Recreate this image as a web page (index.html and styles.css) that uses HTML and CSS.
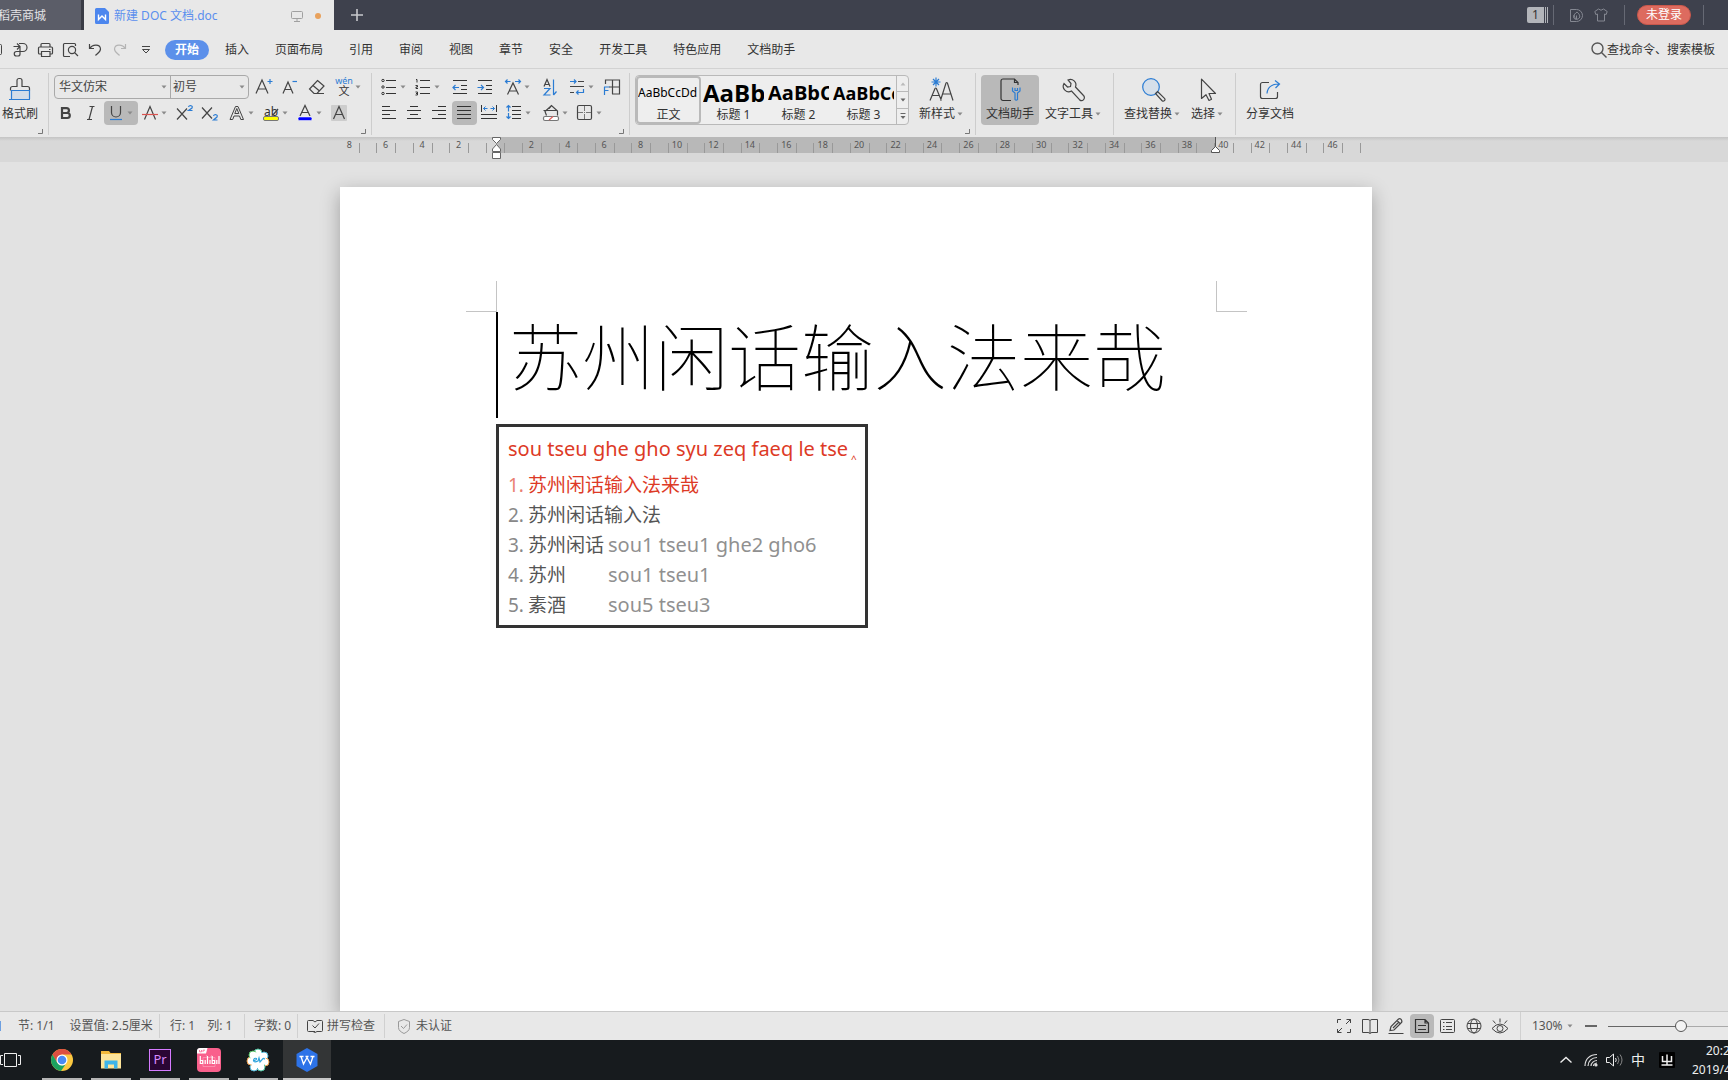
FILE: index.html
```html
<!DOCTYPE html>
<html lang="zh-CN">
<head>
<meta charset="utf-8">
<title>新建 DOC 文档.doc</title>
<link rel="stylesheet" href="styles.css">
</head>
<body>
<svg class="sprite" aria-hidden="true">
  <symbol id="caret" viewBox="0 0 8 8"><path d="M1.500 2.500h5L4 5.500z" fill="#8a8a8a"/></symbol>
  <symbol id="launch" viewBox="0 0 6 6"><path d="M5.500 1v4.500H1" fill="none" stroke="#777"/></symbol>
</svg>

<header class="titlebar">
  <button class="tab tab-store">稻壳商城</button>
  <div class="tab tab-doc">
    <svg width="14" height="16" viewBox="0 0 14 16"><path d="M1.500 0H10l4 4v10.500a1.500 1.500 0 0 1-1.500 1.500h-11A1.500 1.500 0 0 1 0 14.500v-13A1.500 1.500 0 0 1 1.500 0z" fill="#4c86ee"/><path d="M3.500 6.500v5L7 8l3.500 3.500v-5" fill="none" stroke="#fff" stroke-width="1.400"/></svg>
    <span class="tab-name">新建 DOC 文档.doc</span>
    <svg class="tab-screen" width="12" height="12" viewBox="0 0 12 12"><path d="M1.500 1.500h9a1 1 0 0 1 1 1v5a1 1 0 0 1-1 1h-9a1 1 0 0 1-1-1v-5a1 1 0 0 1 1-1zM6 9v2M3 11.500h6" fill="none" stroke="#a0a0a0"/></svg>
    <span class="tab-dot"></span>
  </div>
  <button class="tab-add" aria-label="新建"><svg width="14" height="14" viewBox="0 0 14 14"><path d="M7 1v12M1 7h12" stroke="#c8c9cd" stroke-width="1.600"/></svg></button>
  <div class="title-tools">
    <span class="badge">1</span><span class="badge-stack"></span>
    <span class="bar"></span>
    <svg class="t-docer" width="13" height="13" viewBox="0 0 13 13" fill="none" stroke="#858892"><path d="M.5.5H6.500a6 6 0 0 1 0 12H.5z"/><path d="M6.500 10.500c-5-1-3-5 .5-7.500 2.500 2 5 6-.5 7.500zM6.500 10V6.500M4 6q0 3 2.500 4"/></svg>
    <svg class="t-skin" width="14" height="14" viewBox="0 0 14 14" fill="none" stroke="#858892"><path d="M4.500 1L.8 3.500l1 3 1.700-.5v7h7v-7l1.700.5 1-3L9.500 1q-2.500 2.500-5 0z"/></svg>
    <span class="bar"></span>
    <button class="login">未登录</button>
    <span class="bar"></span>
  </div>
</header>

<nav class="menubar">
  <div class="quick">
    <svg width="7" height="24" viewBox="0 0 7 24" fill="none" stroke="#444"><path d="M0 6.500h.5a1 1 0 0 1 1 1v8a1 1 0 0 1-1 1H0"/></svg>
    <button aria-label="输出为PDF"><svg viewBox="0 0 24 24" fill="none" stroke="#444" stroke-width="1.200"><path d="M5.500 8.500h6M9 5.500l3 3-3 3M11 5.500h4a4 4 0 0 1 0 8H8.500a2.200 2.200 0 0 0 0 4.500h1.500a2 2 0 0 0 2-2V9"/></svg></button>
    <button aria-label="打印"><svg viewBox="0 0 24 24" fill="none" stroke="#444" stroke-width="1.200"><path d="M8 9V6.500a1 1 0 0 1 1-1h7a1 1 0 0 1 1 1V9M8 16H6.500a1 1 0 0 1-1-1v-5a1 1 0 0 1 1-1h12a1 1 0 0 1 1 1v5a1 1 0 0 1-1 1H17M8.500 13.500h8.500v5H8.500zM16 11.500h1.500"/></svg></button>
    <button aria-label="打印预览"><svg viewBox="0 0 24 24" fill="none" stroke="#444" stroke-width="1.200"><path d="M12 18.500H6.500a1 1 0 0 1-1-1v-11a1 1 0 0 1 1-1h10a1 1 0 0 1 1 1V8M16.500 14.500l3.500 3.500"/><circle cx="14" cy="12" r="3.600"/></svg></button>
    <button aria-label="撤销"><svg viewBox="0 0 24 24" fill="none" stroke="#444" stroke-width="1.200"><path d="M6.500 6v4.500H11M7 10.500C9 6.500 17 5.500 17.500 11c0 3-3 4.500-5 6.500"/></svg></button>
    <button aria-label="恢复"><svg viewBox="0 0 24 24" fill="none" stroke="#b4b4b4" stroke-width="1.200"><path d="M17.500 6v4.500H13M17 10.500C15 6.500 7 5.500 6.500 11c0 3 3 4.500 5 6.500"/></svg></button>
    <button aria-label="自定义快速访问工具栏"><svg viewBox="0 0 24 24" fill="none" stroke="#444"><path d="M9 8.500h8M9.500 11.500h7l-3.500 3.500z"/></svg></button>
  </div>
  <div class="menus">
    <button class="active">开始</button><button>插入</button><button>页面布局</button><button>引用</button><button>审阅</button><button>视图</button><button>章节</button><button>安全</button><button>开发工具</button><button>特色应用</button><button>文档助手</button>
  </div>
  <button class="search"><svg width="16" height="16" viewBox="0 0 16 16" fill="none" stroke="#555" stroke-width="1.400"><circle cx="6.500" cy="6.500" r="5.500"/><path d="M10.500 10.500l5 5"/></svg>查找命令、搜索模板</button>
</nav>

<section class="ribbon">
  <div class="group g-brush">
    <button class="big"><svg viewBox="0 0 26 26" fill="none" stroke="#444" stroke-width="1.200"><path d="M4 14h18v9H4z" fill="#d3dde8" stroke="none"/><path d="M3.500 13.500v-2a2 2 0 0 1 2-2H10V3.500a2 2 0 0 1 2-2h1a2 2 0 0 1 2 2v6h5.500a2 2 0 0 1 2 2v2"/><path d="M2 22.500h21M4.500 22V13.500h18V22" stroke="#2b7cd3"/></svg><span>格式刷</span></button>
    <svg class="launch"><use href="#launch"/></svg>
  </div>

  <div class="group g-font">
    <div class="row">
      <div class="combo">
        <select class="font-name" aria-label="字体"><option>华文仿宋</option></select>
        <select class="font-size" aria-label="字号"><option>初号</option></select>
      </div>
      <button class="tool" aria-label="增大字号"><svg viewBox="0 0 24 24" fill="none" stroke="#444" stroke-width="1.200"><path d="M5 18.500L11 5l6 13.500M7 14h8"/><path d="M16.500 6.500h5M19 4v5" stroke="#2b7cd3"/></svg></button>
      <button class="tool" aria-label="减小字号"><svg viewBox="0 0 24 24" fill="none" stroke="#444" stroke-width="1.200"><path d="M7 18.500L12 7l5 11.500M8.500 14.500h7"/><path d="M16.500 6.500h4.500" stroke="#2b7cd3"/></svg></button>
      <button class="tool sp" aria-label="清除格式"><svg viewBox="0 0 24 24" fill="none" stroke="#444" stroke-width="1.200"><path d="M13.500 5.500l6.500 5.500-7 7.500h-3L5.500 14zM9 10.500l6.500 5.500M10 18.500h10"/></svg></button>
      <button class="tool drop sp" aria-label="拼音指南"><svg viewBox="0 0 24 24"><text x="12" y="9" text-anchor="middle" class="g-wen">wén</text><text x="12" y="20" text-anchor="middle" class="g-zh">文</text></svg><svg class="caret"><use href="#caret"/></svg></button>
    </div>
    <div class="row">
      <button class="tool" aria-label="加粗"><svg viewBox="0 0 24 24" fill="none" stroke="#444" stroke-width="2.200"><path d="M8 7.100h4.500a2.400 2.400 0 0 1 0 4.900H8zM8 12h5.300a2.500 2.500 0 0 1 0 5H8zM8 6v12"/></svg></button>
      <button class="tool" aria-label="倾斜"><svg viewBox="0 0 24 24" fill="none" stroke="#444" stroke-width="1.200"><path d="M10.500 5.500h5M8 18.500h5M13.500 5.500l-3.500 13"/></svg></button>
      <button class="tool drop on" aria-label="下划线"><svg viewBox="0 0 24 24" fill="none" stroke="#444" stroke-width="1.200"><path d="M7.500 5v6.500a4.500 4.500 0 0 0 9 0V5"/><path d="M6 18.500h12" stroke="#2b7cd3"/></svg><svg class="caret"><use href="#caret"/></svg></button>
      <button class="tool drop" aria-label="删除线"><svg viewBox="0 0 24 24" fill="none" stroke="#444" stroke-width="1.200"><path d="M6.500 18.500L12 5.500l5.500 13"/><path d="M4 13.500h16" stroke="#d9534f"/></svg><svg class="caret"><use href="#caret"/></svg></button>
      <button class="tool" aria-label="上标"><svg viewBox="0 0 24 24" fill="none" stroke="#444" stroke-width="1.200"><path d="M5 7.500l10 11M15 7.500l-10 11"/><path d="M16.500 6q.5-1.500 2-1.500 2.500.5 1.500 2.500l-3.500 2.500h4" stroke="#2b7cd3"/></svg></button>
      <button class="tool" aria-label="下标"><svg viewBox="0 0 24 24" fill="none" stroke="#444" stroke-width="1.200"><path d="M5 6.500l10 11M15 6.500l-10 11"/><path d="M16.500 15q.5-1.500 2-1.500 2.500.5 1.500 2.500l-3.500 3h4" stroke="#2b7cd3"/></svg></button>
      <button class="tool drop sp" aria-label="文字效果"><svg viewBox="0 0 24 24" fill="none" stroke="#444"><path d="M5 18.500L10.500 5.500h2.500L18.500 18.500h-2.700l-1.300-3.500H9l-1.300 3.500zM9.800 12.500h4L11.800 7.500z"/></svg><svg class="caret"><use href="#caret"/></svg></button>
      <button class="tool drop" aria-label="突出显示"><svg viewBox="0 0 24 24"><text x="5" y="15" class="g-ab">ab</text><path d="M14 14l5-6" stroke="#444" stroke-width="1.300"/><rect x="4.500" y="15.500" width="15" height="4" rx="1.500" fill="#ff0" stroke="#777"/></svg><svg class="caret"><use href="#caret"/></svg></button>
      <button class="tool drop" aria-label="字体颜色"><svg viewBox="0 0 24 24" fill="none" stroke="#444" stroke-width="1.200"><path d="M7 15l5-10.500L17 15M8.500 11.500h7"/><rect x="5" y="16" width="14" height="3.500" rx="1.500" fill="#00f" stroke="#fff" stroke-width=".5"/></svg><svg class="caret"><use href="#caret"/></svg></button>
      <button class="tool" aria-label="字符底纹"><svg viewBox="0 0 24 24" fill="none" stroke="#444" stroke-width="1.200"><rect x="4" y="4" width="16" height="16" rx="1" fill="#cdcdcd" stroke="none"/><path d="M6.500 18L12 5.500 17.500 18M8.500 13.500h7"/></svg></button>
    </div>
    <svg class="launch"><use href="#launch"/></svg>
  </div>

  <div class="group g-para">
    <div class="row">
      <button class="tool drop" aria-label="项目符号"><svg viewBox="0 0 24 24" fill="none" stroke="#333"><path d="M9 5.500h10M9 12.500h10M9 18.500h10"/><circle cx="6" cy="5.500" r="1.200"/><circle cx="6" cy="12" r="1.200"/><circle cx="6" cy="18.500" r="1.200"/></svg><svg class="caret"><use href="#caret"/></svg></button>
      <button class="tool drop" aria-label="编号"><svg viewBox="0 0 24 24" fill="none" stroke="#333"><path d="M9 5.500h10M9 12.500h10M9 18.500h10M5 4.500h1v3M4.500 10.500h2v1.500h-1.500v1.500h2M4.500 17h2v3h-2M5 18.500h1.500"/></svg><svg class="caret"><use href="#caret"/></svg></button>
      <button class="tool sp" aria-label="减少缩进"><svg viewBox="0 0 24 24" fill="none" stroke="#333"><path d="M5 5.500h14M13 10.500h6M13 14.500h6M5 18.500h14"/><path d="M5 12.500h6M7.500 10L5 12.500 7.500 15" stroke="#2b7cd3" stroke-width="1.200"/></svg></button>
      <button class="tool" aria-label="增加缩进"><svg viewBox="0 0 24 24" fill="none" stroke="#333"><path d="M5 5.500h14M13 10.500h6M13 14.500h6M5 18.500h14"/><path d="M4.500 12.500h6M8 10l2.500 2.500L8 15" stroke="#2b7cd3" stroke-width="1.200"/></svg></button>
      <button class="tool drop sp" aria-label="字符缩放"><svg viewBox="0 0 24 24" fill="none" stroke="#444" stroke-width="1.200"><path d="M6.500 19.500L12 8l5.500 11.500M8.500 16h7"/><path d="M4.500 6.500h5M6.500 4.500l-2 2 2 2M14 6.500h5.500M17.500 4.500l2 2-2 2" stroke="#2b7cd3"/></svg><svg class="caret"><use href="#caret"/></svg></button>
      <button class="tool sp" aria-label="排序"><svg viewBox="0 0 24 24" fill="none" stroke="#444" stroke-width="1.200"><path d="M7 11.500L10 4.500l3 7M8 9.500h4"/><path d="M7 13.500h6l-6 6.500h6.500M16.500 4.500V20M16.500 20l3-3.500" stroke="#2b7cd3"/></svg></button>
      <button class="tool drop sp" aria-label="换行"><svg viewBox="0 0 24 24" fill="none" stroke="#444" stroke-width="1.200"><path d="M13 6.500h6M5 11.500h14M5 17.500h4"/><path d="M5 6.500h6M9 4.500l2 2-2 2M18.500 14v3.500h-7M13.500 15.500l-2 2 2 2" stroke="#2b7cd3"/></svg><svg class="caret"><use href="#caret"/></svg></button>
      <button class="tool" aria-label="制表位"><svg viewBox="0 0 24 24" fill="none" stroke="#444" stroke-width="1.200"><path d="M6.500 9V5h14v14H13M13.500 5v14M10 12h10"/><path d="M5 12h5.500M5.500 12v8M5 15.500h4.500" stroke="#2b7cd3"/></svg></button>
    </div>
    <div class="row">
      <button class="tool" aria-label="左对齐"><svg viewBox="0 0 24 24" stroke="#333"><path d="M5 5.500h8M5 9.500h14M5 13.500h8M5 17.500h14"/></svg></button>
      <button class="tool" aria-label="居中"><svg viewBox="0 0 24 24" stroke="#333"><path d="M8 5.500h8M5 9.500h14M8 13.500h8M5 17.500h14"/></svg></button>
      <button class="tool" aria-label="右对齐"><svg viewBox="0 0 24 24" stroke="#333"><path d="M11 5.500h8M5 9.500h14M11 13.500h8M5 17.500h14"/></svg></button>
      <button class="tool on" aria-label="两端对齐"><svg viewBox="0 0 24 24" stroke="#333"><path d="M5 5.500h14M5 9.500h14M5 13.500h14M5 17.500h14"/></svg></button>
      <button class="tool" aria-label="分散对齐"><svg viewBox="0 0 24 24" fill="none" stroke="#333"><path d="M4.500 4v7M19.500 4v7M4 13.500h16M4 17.500h16"/><path d="M6.500 7.500h4M8.500 5.500l-2 2 2 2M13.500 7.500h4M15.500 5.500l2 2-2 2" stroke="#2b7cd3"/></svg></button>
      <button class="tool drop" aria-label="行距"><svg viewBox="0 0 24 24" fill="none" stroke="#333"><path d="M10 5.500h9M10 9.500h9M10 13.500h9M10 17.500h9"/><path d="M6.500 4.500v6M4.500 6.500l2-2 2 2M6.500 12v6M4.500 15.500l2 2 2-2" stroke="#2b7cd3" stroke-width="1.200"/></svg><svg class="caret"><use href="#caret"/></svg></button>
      <button class="tool drop sp" aria-label="底纹颜色"><svg viewBox="0 0 24 24" fill="none" stroke="#444" stroke-width="1.200"><path d="M7.500 14.500L6 10.500 12.500 4.500l6 5.500v4.500M12.500 4.500l-2.500 3M4.500 9.500h13.500"/><rect x="4.500" y="15.500" width="15" height="4" rx="1.500" fill="#fff" stroke="#777"/><path d="M10 19l4-3.500" stroke="#e0605c"/></svg><svg class="caret"><use href="#caret"/></svg></button>
      <button class="tool drop" aria-label="边框"><svg viewBox="0 0 24 24" fill="none" stroke="#444"><rect x="4.500" y="4.500" width="14" height="14" rx="1.500" stroke-width="1.200"/><path d="M11.500 5v13M5 11.500h13" stroke="#777" stroke-dasharray="5 1 1 1"/></svg><svg class="caret"><use href="#caret"/></svg></button>
    </div>
    <svg class="launch"><use href="#launch"/></svg>
  </div>

  <div class="group g-style">
    <div class="gallery">
      <button class="style on"><span class="s0">AaBbCcDd</span><span>正文</span></button>
      <button class="style"><span class="s1">AaBb</span><span>标题 1</span></button>
      <button class="style"><span class="s2">AaBbC</span><span>标题 2</span></button>
      <button class="style"><span class="s3">AaBbCc</span><span>标题 3</span></button>
      <div class="scroller">
        <button aria-label="上"><svg viewBox="0 0 8 8"><path d="M1.500 5.500h5L4 2.500z" fill="#bbb"/></svg></button>
        <button aria-label="下"><svg viewBox="0 0 8 8"><path d="M1.500 2.500h5L4 5.500z" fill="#666"/></svg></button>
        <button aria-label="更多"><svg viewBox="0 0 8 8"><path d="M1.500 1.500h5" stroke="#666"/><path d="M1.500 4h5L4 7z" fill="#666"/></svg></button>
      </div>
    </div>
    <button class="big"><svg viewBox="0 0 26 26" fill="none" stroke="#444" stroke-width="1.200"><path d="M1 23.500l5-12q.7-1 1.400 0l5 12M3 18.500h7.500M11.500 23.500L17 6q.7-1 1.400 0l5.600 17.500M13.500 17h9"/><path d="M7 .5v9M2.500 5h9M4 2l6 6M10 2L4 8" stroke="#2b7cd3"/></svg><span>新样式<svg class="caret"><use href="#caret"/></svg></span></button>
    <svg class="launch"><use href="#launch"/></svg>
  </div>

  <div class="group g-help">
    <button class="big on"><svg viewBox="0 0 26 26" fill="none" stroke="#333" stroke-width="1.200"><path d="M14 23.500H6a2 2 0 0 1-2-2V4a2 2 0 0 1 2-2h11.500L21 5.500V8M17.500 2v3.500H21"/><path d="M15.500 10.500v3.500l2.500 2v6.500a1.500 1.500 0 0 0 2.500 0V16l2.500-2v-3.500M18 11v2.500h2.500V11" stroke="#2b7cd3"/></svg><span>文档助手</span></button>
    <button class="big"><svg viewBox="0 0 26 26" fill="none" stroke="#444" stroke-width="1.200"><path d="M7 3a5.500 5.500 0 0 1 7.500 7l8 8.500a2.800 2.800 0 0 1-4 4.200l-8-8.700A5.500 5.500 0 0 1 3 6.500L6.500 10l3-.5.500-3z"/></svg><span>文字工具<svg class="caret"><use href="#caret"/></svg></span></button>
  </div>

  <div class="group g-find">
    <button class="big"><svg viewBox="0 0 26 26" fill="none" stroke="#444" stroke-width="1.200"><circle cx="11" cy="10" r="8.300" fill="#d5dfea" stroke="#2b7cd3"/><path d="M17.500 14.500l7 6.800a1.700 1.700 0 0 1-2.400 2.400l-6.600-7.200z"/></svg><span>查找替换<svg class="caret"><use href="#caret"/></svg></span></button>
    <button class="big"><svg viewBox="0 0 26 26" fill="none" stroke="#444" stroke-width="1.200"><path d="M6.500 2.200v19.300l4.500-3.800 3 5.800 2.500-1.200-2.500-5.800h6.500z" stroke-linejoin="round"/></svg><span>选择<svg class="caret"><use href="#caret"/></svg></span></button>
  </div>

  <div class="group g-share">
    <button class="big"><svg viewBox="0 0 26 26" fill="none" stroke="#444" stroke-width="1.200"><path d="M12 5.500H5.500a2 2 0 0 0-2 2v12a2 2 0 0 0 2 2h13a2 2 0 0 0 2-2V15"/><path d="M10 16.500c.5-6 4-9.500 12-9.500M18 3.500l4.500 3.500-4 4" stroke="#2b7cd3"/></svg><span>分享文档</span></button>
  </div>
</section>

<div class="ruler">
  <div class="ruler-inner">
    <i>8</i><i>6</i><i>4</i><i>2</i><i></i><i>2</i><i>4</i><i>6</i><i>8</i><i>10</i><i>12</i><i>14</i><i>16</i><i>18</i><i>20</i><i>22</i><i>24</i><i>26</i><i>28</i><i>30</i><i>32</i><i>34</i><i>36</i><i>38</i><i>40</i><i>42</i><i>44</i><i>46</i>
    <svg class="mark mark-left" viewBox="0 0 9 22" fill="#fff" stroke="#666"><path d="M.5.5h8v2l-4 4-4-4zM4.500 7.500L8.500 12v2.500h-8V12zM.5 15.500h8v6h-8z"/></svg>
    <svg class="mark mark-right" viewBox="0 0 9 22" fill="#fff" stroke="#555"><path d="M4.500 0v10"/><path d="M4.500 9.500l4 4v2h-8v-2z"/></svg>
  </div>
</div>

<main class="workspace">
  <article class="page">
    <div class="corners"><span class="corner tl"></span><span class="corner tr"></span></div>
    <h1 class="heading">苏州闲话输入法来哉</h1>
    <div class="ime">
      <p class="code">sou tseu ghe gho syu zeq faeq le tse<span class="hat">‸</span></p>
      <ol>
        <li class="hit"><b>1.</b><span>苏州闲话输入法来哉</span></li>
        <li><b>2.</b><span>苏州闲话输入法</span></li>
        <li><b>3.</b><span>苏州闲话</span><em>sou1 tseu1 ghe2 gho6</em></li>
        <li><b>4.</b><span>苏州</span><em>sou1 tseu1</em></li>
        <li><b>5.</b><span>素酒</span><em>sou5 tseu3</em></li>
      </ol>
    </div>
  </article>
</main>

<footer class="status">
  <div class="cell c-page"></div>
  <div class="cell c-sec"><span>节: 1/1</span><span>设置值: 2.5厘米</span></div>
  <div class="cell c-pos"><span>行: 1</span><span>列: 1</span></div>
  <div class="cell c-count"><span>字数: 0</span></div>
  <div class="cell c-spell"><svg width="16" height="14" viewBox="0 0 16 14" fill="none" stroke="#444"><path d="M8 12.500H1.500a1 1 0 0 1-1-1v-9a1 1 0 0 1 1-1H6l2 1.500 2-1.500h4.500a1 1 0 0 1 1 1v9a1 1 0 0 1-1 1H10l-2 1-2-1M5.500 6.500L8 9l4-4.500"/></svg>拼写检查</div>
  <div class="cell c-auth"><svg width="12" height="15" viewBox="0 0 12 15" fill="none" stroke="#999"><path d="M6 .5L11.500 2.500v6c0 3-2.500 4.500-5.500 6-3-1.500-5.500-3-5.500-6v-6zM3 7l2.500 2.500L9 5.500"/></svg>未认证</div>
  <div class="views">
    <button aria-label="全屏"><svg viewBox="0 0 24 24" fill="none" stroke="#444"><path d="M5.500 9V5.500H9M18.500 15v3.500H15M14.500 5.500h4V9M18.500 5.500L14 10M9.500 18.500h-4V15M5.500 18.500L10 14"/></svg></button>
    <button aria-label="阅读版式"><svg viewBox="0 0 24 24" fill="none" stroke="#444"><path d="M12 6.500q-1-1-2-1H4.500v13H10q1 0 2 1 1-1 2-1h5.500v-13H14q-1 0-2 1v13"/></svg></button>
    <button aria-label="写作模式"><svg viewBox="0 0 24 24" fill="none" stroke="#444" stroke-width="1.200"><path d="M6 16.500l1-4 7.500-7.500q2-1 3 1t-.5 3L10 16zM13 6.500l3 3M4.500 19.500h15M9 14l6-6"/></svg></button>
    <button class="on" aria-label="页面视图"><svg viewBox="0 0 24 24" fill="none" stroke="#333" stroke-width="1.200"><path d="M5.500 5.500h9.500l3.500 3.500v9.500h-13zM15 5.500v3.500h3.500M8 11.500h8M8 15.500h8"/></svg></button>
    <button aria-label="大纲"><svg viewBox="0 0 24 24" fill="none" stroke="#444"><rect x="4.500" y="5.500" width="14" height="13" rx="1"/><path d="M10 8.500h6M10 12.500h6M10 15.500h6M7 8.500h1.500M7 12.500h1.500M7 15.500h1.500"/></svg></button>
    <button aria-label="Web版式"><svg viewBox="0 0 24 24" fill="none" stroke="#444"><circle cx="12" cy="12" r="7"/><ellipse cx="12" cy="12" rx="3.500" ry="7"/><path d="M5.500 9.500h13M5.500 14.500h13"/></svg></button>
    <button aria-label="护眼模式"><svg viewBox="0 0 24 24" fill="none" stroke="#444"><path d="M4 14.500q8-9 16 0-8 9-16 0z"/><circle cx="12" cy="14.500" r="3"/><path d="M12 4.500v4M5 6.500l2.500 3M19 6.500l-2.500 3"/></svg></button>
  </div>
  <div class="zoom">
    <button class="zoom-val">130%<svg class="caret"><use href="#caret"/></svg></button>
    <button class="minus" aria-label="缩小"></button>
    <input type="range" min="0" max="100" value="62" aria-label="显示比例">
  </div>
</footer>

<div class="taskbar">
  <button class="taskview" aria-label="任务视图"><svg width="21" height="16" viewBox="0 0 21 16" fill="none" stroke="#eee"><path d="M4.500 1.500h12v13h-12zM3 3.500H.5v9H3M18 3.500h2.500v9H18"/></svg></button>
  <div class="apps">
    <button aria-label="Chrome"><svg width="24" height="24" viewBox="0 0 24 24"><circle cx="12" cy="12" r="11" fill="#fbc841"/><path d="M2.500 6.500A11 11 0 0 1 21.500 6.500H12L7.200 14.700z" fill="#dd4f41"/><path d="M2.500 6.500L7.300 14.700 12 17.500l3.500-1-4.500 6.450A11 11 0 0 1 2.500 6.500z" fill="#1ba261"/><circle cx="12" cy="12" r="5.500" fill="#fff"/><circle cx="12" cy="12" r="4.300" fill="#4a8af4"/></svg></button>
    <button aria-label="文件资源管理器"><svg width="22" height="20" viewBox="0 0 22 20"><path d="M1 1h8l1.500 2H21v15H1z" fill="#f3b93b"/><path d="M1 4h20v14.500H1z" fill="#fde49a"/><path d="M4.500 18.500v-8h13v8H14v-4H8v4z" fill="#3db4ea"/></svg></button>
    <button aria-label="Premiere Pro"><span class="pr">Pr</span></button>
    <button aria-label="bilibili"><svg width="24" height="24" viewBox="0 0 24 24"><rect width="24" height="24" rx="4" fill="#f9608c"/><path d="M0 5.500V3a3 3 0 0 1 3-3h7.500L9 5.500z" fill="#fff"/><path d="M2.500 2v1.800h2V2M6 4V2.200h2" fill="none" stroke="#f9608c" stroke-width=".8"/><path d="M6 9.500h12v9H6zM9 7l2 2.500M15 7l-2 2.500" fill="none" stroke="#ff9dba" stroke-width=".7"/><path d="M3.300 8v7.500h2.400v-3H3.300M8.200 12v4M10.500 8v8M13 12v4M15.200 8v7.500h2.400v-3h-2.400M19.800 12v4M22 8v8" fill="none" stroke="#fff" stroke-width="1.200"/></svg></button>
    <button aria-label="EV录屏"><svg width="24" height="24" viewBox="0 0 24 24"><g fill="#fff" stroke-width="1"><circle cx="12" cy="5" r="4" stroke="#4fc3a1"/><circle cx="18" cy="8" r="4" stroke="#53b7d8"/><circle cx="19" cy="14" r="4" stroke="#f0a04b"/><circle cx="15" cy="19" r="4" stroke="#4fc3a1"/><circle cx="8" cy="19" r="4" stroke="#53b7d8"/><circle cx="5" cy="13" r="4" stroke="#f0a04b"/><circle cx="7" cy="7" r="4" stroke="#5bc46a"/></g><circle cx="12" cy="12" r="8" fill="#fff"/><path d="M7 13q4-1 3.500-2.500-2.500-1-3 2Q8 15 12 13l1-3 1 4 3-3.500q2-.5 1 1" fill="none" stroke="#2fa3dc" stroke-width="1.200"/></svg></button>
    <button class="current" aria-label="WPS"><svg width="22" height="24" viewBox="0 0 22 24"><path d="M11 0l10.500 6v12L11 24 .5 18V6z" fill="#2d73e8"/><path d="M3.500 8.500h4M9.500 8.500h3M14.500 8.500h4M5 8.500L7.500 16l3.500-6.500 3.500 6.500L17 8.500" fill="none" stroke="#fff" stroke-width="1.300"/></svg></button>
  </div>
  <div class="tray">
    <svg width="12" height="8" viewBox="0 0 12 8" fill="none" stroke="#eee" stroke-width="1.400"><path d="M.5 6.500L6 1.500l5.500 5"/></svg>
    <svg width="14" height="14" viewBox="0 0 14 14" fill="none" stroke="#ddd" stroke-width="1.200"><path d="M1 13C1 6 6 1.500 13 1.500M4 13c0-5 4-8.500 9-8.500M7 13c0-3 3-5.500 6-5.500M9.500 13q0-2.500 3.500-3"/><circle cx="12" cy="12" r="1" fill="#fff"/></svg>
    <svg width="17" height="14" viewBox="0 0 17 14" fill="none" stroke="#eee"><path d="M.5 4.500h3l4-3.500v12l-4-3.500h-3zM9.500 5q1.500 2 0 4"/><path d="M11.500 3q3 4 0 8M14 1.500q4 5.500 0 11" stroke="#888"/></svg>
    <span class="lang">中</span>
    <svg class="imeicon" width="16" height="16" viewBox="0 0 16 16"><rect width="16" height="16" rx="1" fill="#000"/><path d="M3.500 4v5.500h9V4M8 2.500V13M2.500 13h11" fill="none" stroke="#eee" stroke-width="1.500"/></svg>
    <div class="clock"><span class="time">20:2</span><span>2019/4</span></div>
  </div>
</div>
</body>
</html>
```
FILE: styles.css
```css
* { box-sizing: border-box; }

body {
  margin: 0;
  height: 100vh;
  display: flex;
  flex-direction: column;
  overflow: hidden;
  background: #e2e2e2;
  color: #333;
  font: 12px/16px "Noto Sans", "Noto Sans CJK SC", sans-serif;
}

button {
  margin: 0;
  padding: 0;
  border: 0;
  background: none;
  color: inherit;
  font: inherit;
  white-space: nowrap;
}

svg { display: block; flex: none; }
.sprite { position: absolute; width: 0; height: 0; }
.caret { width: 8px; height: 8px; }

/* title bar */
.titlebar { display: flex; flex: none; height: 30px; background: #3e414d; }
.tab { display: flex; align-items: center; }
.tab-store {
  justify-content: flex-end;
  width: 84px;
  padding: 2px 35px 0 0;
  border-right: 3px solid #3a3c46;
  background: #5b5d68;
  color: #e4e4e6;
}
.tab-doc { width: 250px; padding: 2px 13px 0 11px; background: #e8e8e8; color: #5b8fee; }
.tab-name { flex: 1; margin-left: 5px; }
.tab-dot { width: 6px; height: 6px; margin-left: 12px; border-radius: 50%; background: #e8a15c; }
.tab-add { width: 46px; display: grid; place-items: center; }
.title-tools { display: flex; align-items: center; margin-left: auto; padding-right: 24px; }
.badge {
  width: 17px;
  height: 16px;
  border-radius: 2px 0 0 2px;
  background: #b3b5ba;
  color: #333;
  text-align: center;
}
.badge-stack { width: 4px; height: 16px; background: repeating-linear-gradient(90deg, #3e414d 0 1px, #b3b5ba 1px 2px); }
.bar { width: 1px; height: 20px; background: #666974; }
.badge-stack + .bar { margin: 0 16px 0 5px; }
.t-skin { margin: 0 16px 0 11px; }
.login {
  width: 54px;
  height: 20px;
  margin: 0 12px;
  border: 1px solid #c9574b;
  border-radius: 10px;
  background: #dd6b5f;
  color: #fff;
  line-height: 18px;
}

/* menu bar */
.menubar {
  display: flex;
  flex: none;
  align-items: center;
  height: 39px;
  padding-top: 1px;
  border-bottom: 1px solid #d2d2d2;
  background: #e8e8e8;
}
.quick { display: flex; width: 165px; }
.quick button { width: 25px; display: grid; place-items: center; }
.quick button svg { width: 24px; height: 24px; }
.menus { display: flex; gap: 6px; }
.menus button { height: 20px; padding: 1px 10px 0; border-radius: 10px; }
.menus .active { background: #5c90ea; color: #fff; font-weight: 700; }
.search { display: flex; align-items: center; margin-left: auto; padding-right: 13px; }

/* ribbon */
.ribbon { display: flex; flex: none; height: 68px; background: #e8e8e8; }
.group { position: relative; flex: none; margin: 4px 0 2px; padding: 2px 5px 0 4px; border-right: 1px solid #cdcdcd; }
.launch { position: absolute; right: 5px; bottom: 1px; width: 6px; height: 6px; }
.row { display: flex; height: 24px; margin-bottom: 2px; }
.tool { display: flex; align-items: center; width: 25px; height: 24px; border-radius: 4px; }
.tool svg:first-child { width: 24px; height: 24px; }
.tool.drop { width: 34px; padding-right: 2px; }
.tool.sp { margin-left: 3px; }
.tool .caret { margin-left: -2px; }
.on { background: #b9b9b9; }
.g-wen { font-size: 9px; fill: #2b7cd3; }
.g-zh { font-size: 11px; fill: #333; }
.g-ab { font-size: 12px; fill: #333; }

.g-brush { width: 49px; padding-left: 0; }
.g-font { width: 323px; padding-left: 5px; }
.g-para { width: 258px; padding-left: 5px; }
.g-style { display: flex; width: 346px; padding-left: 5px; }
.g-help { display: flex; width: 138px; padding-left: 5px; }
.g-find { display: flex; width: 122px; padding-left: 5px; }
.g-share { border-right: 0; padding-left: 5px; }

.combo { display: flex; width: 195px; height: 24px; margin-right: 2px; border: 1px solid #a9a9a9; border-radius: 4px; }
.combo select {
  appearance: none;
  padding: 0 4px;
  border: 0;
  background: url("data:image/svg+xml,%3Csvg xmlns='http://www.w3.org/2000/svg' width='8' height='8'%3E%3Cpath d='M1.500 2.500h5L4 5.500z' fill='%238a8a8a'/%3E%3C/svg%3E") no-repeat right 2px center;
  color: #444;
  font: inherit;
}
.font-name { width: 115px; }
.font-size { flex: 1; }
.combo .font-size { padding-left: 2px; border-left: 1px solid #a9a9a9; }

.big { display: flex; flex-direction: column; align-items: center; height: 50px; padding: 2px 5px 0; border-radius: 4px; }
.big > svg { width: 26px; height: 26px; }
.big > span { display: flex; align-items: center; gap: 1px; margin-top: 3px; }
.g-brush .big { padding: 2px 0 0 2px; }
.g-help .big + .big { padding-left: 6px; }

.gallery { display: flex; height: 50px; width: 274px; margin-right: 5px; border: 1px solid #b9b9b9; border-radius: 4px; background: #eee; }
.style { display: flex; flex-direction: column; width: 65px; padding: 0; border: 2px solid transparent; overflow: hidden; }
.style.on { border-color: #b9b9b9; border-radius: 4px; background: #eee; }
.style span { display: block; width: 100%; height: 15px; line-height: 15px; }
.style span:first-child { height: 29px; overflow: hidden; color: #000; text-align: left; line-height: 30px; }
.style .s1, .style .s2, .style .s3 { font-family: "Open Sans", sans-serif; font-weight: 700; }
.style .s1 { font-size: 24px; }
.style .s2 { font-size: 20px; }
.style .s3 { font-size: 18px; }
.scroller { display: flex; flex: 1; flex-direction: column; border-left: 1px solid #b9b9b9; }
.scroller button { display: grid; flex: 1; place-items: center; }
.scroller button + button { border-top: 1px solid #b9b9b9; }
.scroller svg { width: 8px; height: 8px; }

/* ruler */
.ruler { flex: none; height: 25px; padding-right: 16px; background: linear-gradient(#c4c4c4, #d8d8d8 4px); }
.ruler-inner {
  position: relative;
  display: flex;
  width: 1032px;
  height: 16px;
  margin: 0 auto;
  padding: 0 11px 0 1px;
  background: linear-gradient(90deg, transparent 157px, #b8b8b8 157px 875px, transparent 875px);
}
.ruler-inner i {
  flex: 1;
  width: 0;
  padding-right: 20px;
  background: linear-gradient(#999, #999) right bottom / 1px 10px no-repeat, linear-gradient(#999, #999) center bottom / 1px 10px no-repeat;
  color: #555;
  font-size: 9px;
  font-style: normal;
  line-height: 16px;
  text-align: center;
}
.mark { position: absolute; top: 0; width: 9px; height: 22px; }
.mark-left { left: 152px; }
.mark-right { left: 871px; }

/* document */
.workspace { flex: 1; min-height: 0; padding: 25px 16px 0 0; overflow: hidden; }
.page {
  width: 1032px;
  min-height: 100%;
  margin: 0 auto;
  padding: 94px 125px 0 126px;
  background: #fff;
  box-shadow: 0 6px 18px rgba(0, 0, 0, .3);
}
.corners { display: flex; justify-content: space-between; }
.corner { width: 31px; height: 31px; border-bottom: 1px solid #c4c4c4; }
.tl { border-right: 1px solid #c4c4c4; }
.tr { border-left: 1px solid #c4c4c4; }
.heading {
  height: 106px;
  margin: 0 30px;
  padding-left: 11px;
  border-left: 2px solid #000;
  color: #000;
  font-family: "Noto Sans CJK SC", sans-serif;
  font-size: 73px;
  font-weight: 100;
  line-height: 82px;
  white-space: nowrap;
}
.ime { width: 372px; height: 204px; margin: 6px 30px 0; padding: 7px 9px; border: 3px solid #333; background: #fff; font-size: 19px; line-height: 30px; }
.ime p { margin: 0 0 4px; color: #dd3a26; font-size: 20px; white-space: nowrap; }
.ime ol { margin: 0; padding: 0; list-style: none; }
.ime li { display: flex; color: #555; }
.ime b { width: 20px; color: #888; font-weight: 400; }
.ime li span { min-width: 80px; }
.ime em { color: #909090; font-size: 20px; font-style: normal; }
.ime .hit { color: #dd3a26; }
.ime .hit b { color: #ea7f73; }
.hat { margin-left: 3px; font-size: 14px; }

/* status bar */
.status { display: flex; flex: none; height: 29px; border-top: 1px solid #c8c8c8; background: #e8e8e8; color: #555; overflow: hidden; }
.cell { display: flex; align-items: center; margin: 2px 0; border-right: 1px solid #d0d0d0; white-space: nowrap; }
.c-page { width: 9px; margin: 9px 0; border-left: 1px solid #6d9fe0; border-right-color: transparent; }
.c-sec { width: 151px; padding-left: 9px; gap: 15px; }
.c-pos { width: 85px; padding-left: 10px; gap: 12px; }
.c-count { width: 53px; padding-left: 9px; }
.c-spell { width: 87px; padding-left: 9px; gap: 4px; }
.c-auth { padding-left: 13px; gap: 6px; border-right: 0; }
.views { display: flex; align-items: center; gap: 2px; margin-left: auto; padding-right: 8px; border-right: 1px solid #d0d0d0; }
.views button { width: 24px; height: 24px; border-radius: 4px; }
.views svg { width: 24px; height: 24px; }
.zoom { display: flex; align-items: center; width: 207px; padding-left: 11px; }
.zoom-val { display: flex; align-items: center; gap: 3px; width: 53px; }
.minus { width: 12px; height: 2px; background: #666; }
.zoom input {
  appearance: none;
  width: 120px;
  height: 14px;
  margin: 0 0 0 11px;
  background: linear-gradient(90deg, #666 60%, #aaa 60%) center / 100% 1px no-repeat;
}
.zoom input::-webkit-slider-thumb { appearance: none; width: 12px; height: 12px; border: 1px solid #555; border-radius: 50%; background: #f4f4f4; }

/* taskbar */
.taskbar { display: flex; flex: none; height: 40px; background: #171b1e; color: #eee; overflow: hidden; }
.taskview { width: 38px; }
.apps { display: flex; gap: 1px; }
.apps button {
  display: grid;
  place-items: center;
  width: 48px;
  background: linear-gradient(#b5b5b5, #b5b5b5) center bottom / 40px 2px no-repeat;
}
.apps .current { background: linear-gradient(#c8c8c8, #c8c8c8) center bottom / 48px 2px no-repeat #333536; }
.pr { width: 22px; height: 22px; border: 1px solid #d57bff; background: #2a0634; color: #d88cff; font-size: 13px; line-height: 18px; }
.tray { display: flex; align-items: center; margin-left: auto; }
.tray svg { margin-right: 8px; }
.tray svg:first-child { margin-right: 12px; }
.lang { margin-right: 14px; font-size: 14px; }
.tray .imeicon { margin-right: 17px; }
.clock { display: flex; flex-direction: column; width: 36px; line-height: 19px; overflow: hidden; white-space: nowrap; }
.time { padding-left: 14px; }
```
